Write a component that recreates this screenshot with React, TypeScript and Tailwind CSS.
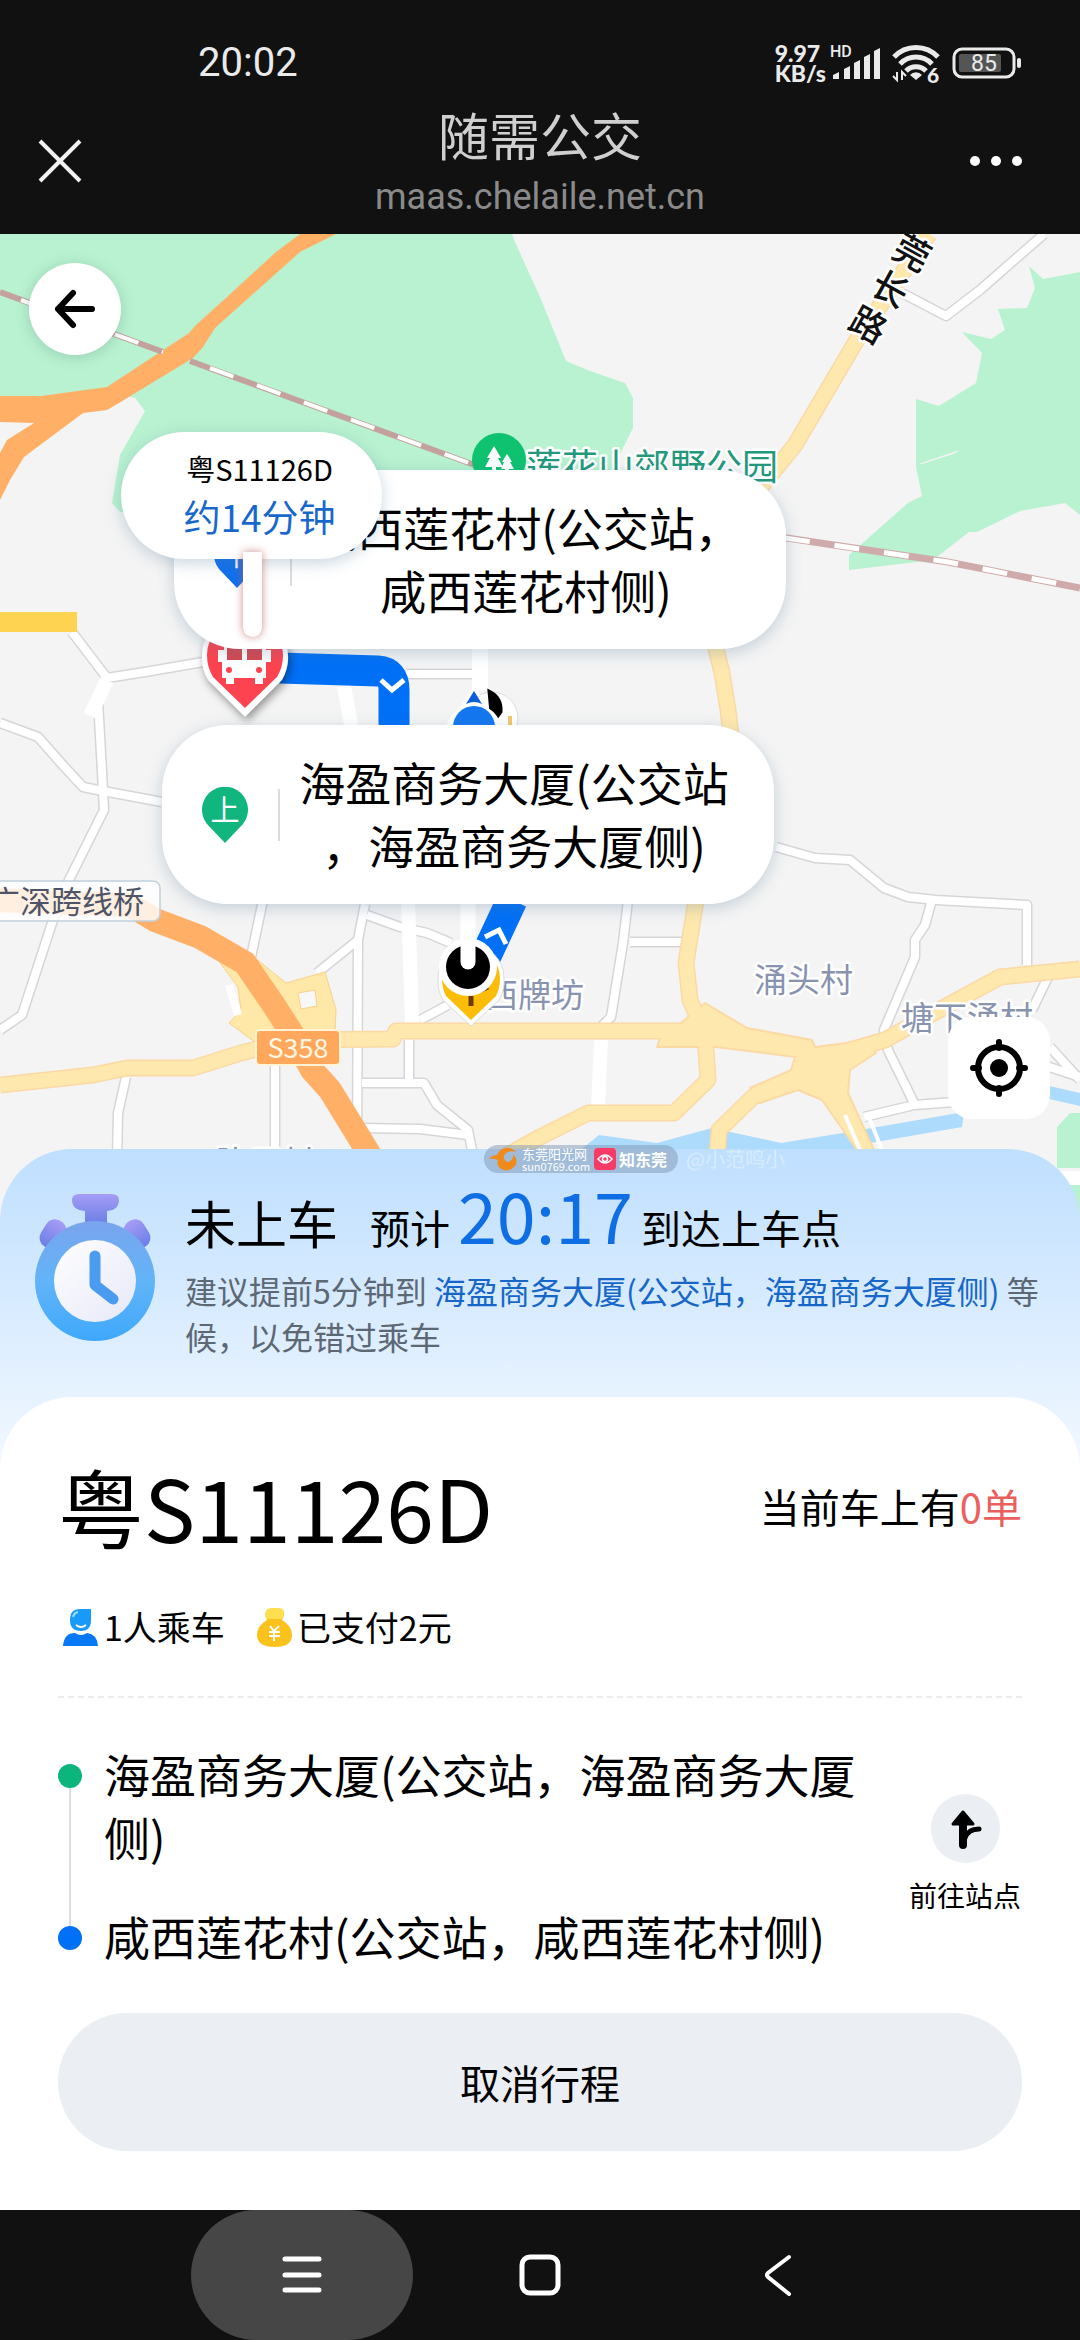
import { ReactNode } from "react";

const FONT = "font-['Noto_Sans_CJK_SC','Noto_Sans',sans-serif]";

const whiteRoads = [
  "M902 293L946 316L980 290L1044 234",
  "M72 632L107 678L145 672L203 662",
  "M0 723L38 737L60 762L83 787L103 791L162 802",
  "M98 700L103 790L104 810L69 880L52 923L22 1015L0 1030",
  "M406 674H478",
  "M263 900L251 957",
  "M275 1060V1160",
  "M126 1077L118 1113L117 1160",
  "M367 915L400 927L427 933L451 943",
  "M365 904L358 940L357 1160",
  "M358 940L317 973",
  "M409 1040V1083L424 1083L437 1105L468 1130L474 1160",
  "M362 1083H409",
  "M362 1128L420 1129L468 1135",
  "M420 1020L448 1005",
  "M628 900L623 943L611 1017L602 1026",
  "M630 942H683",
  "M776 847L815 858L850 860L884 888L908 897L936 900L1027 905V965",
  "M931 903L925 925L915 940L915 957L884 1030L888 1050L914 1103",
  "M864 1117L914 1105L955 1102",
  "M1048 977L1032 1010",
  "M1050 1047L1080 1080",
  "M1040 1064L1080 1077",
];

const yellowRoads = [
  "M0 1085L93 1075L127 1068H193L241 1053L293 1040L393 1039L396 1031H680",
  "M929 234L858 338L795 445L760 488",
  "M714 640L722 673L728 710L731 735",
  "M696 900L686 963L690 1000L705 1035",
  "M705 1035L708 1080L674 1113H588L540 1137L490 1165",
  "M802 1077L753 1097L719 1130L717 1160",
  "M850 1050L885 1040L930 1015L1000 977L1080 969",
];

function MapCanvas() {
  return (
    <svg className="block w-full h-full" viewBox="0 234 1080 1000" preserveAspectRatio="xMidYMin slice" aria-hidden="true">
      <rect x="0" y="234" width="1080" height="1000" fill="#f4f4f4" />
      {/* parks */}
      <path d="M0 234H512L515 242L540 297L566 361L590 371L625 383L633 398V428L622 450L600 500H200L120 512L112 503L120 455L145 411L135 398L100 390L0 400Z" fill="#b8f2d0" />
      <path d="M1029 266L1043 279L1080 272V515L1065 503L1020 511L977 532H969L933 560L849 570V555L908 503L922 496L916 467V399L939 406L976 383L982 353L962 332L991 339L1005 330L998 309L1027 308L1035 288Z" fill="#b8f2d0" />
      <path d="M920 464L958 451L952 454Z" fill="#f4f4f4" stroke="#f4f4f4" />
      <path d="M1057 1127L1070 1113H1080V1168H1057Z" fill="#b8f2d0" />
      <path d="M1058 1185H1080V1234H1058Z" fill="#b8f2d0" />
      {/* river */}
      <path d="M578 1152L599 1135L657 1143L712 1128L781 1143L843 1133L964 1112L962 1127L870 1143L850 1152Z" fill="#addbfb" />
      <path d="M1045 1085L1080 1093V1106L1045 1098Z" fill="#addbfb" />
      {/* side streets */}
      <g fill="none" strokeLinejoin="round">
        {whiteRoads.map((d) => <path key={d} d={d} stroke="#d6d6da" strokeWidth="11" />)}
        {whiteRoads.map((d) => <path key={d} d={d} stroke="#fff" strokeWidth="8" />)}
        <path d="M107 680L90 716M408 900L412 1022M601 1040L598 1110M344 686L352 730M1050 1178H1080" stroke="#fff" strokeWidth="14" />
        <path d="M480 645V690" stroke="#fff" strokeWidth="16" />
      </g>
      <path d="M0 622H77" stroke="#ffd352" strokeWidth="20" />
      {/* main roads */}
      <g fill="none" strokeLinejoin="round">
        {yellowRoads.map((d) => <path key={d} d={d} stroke="#fbd9a4" strokeWidth="17" />)}
        <path d="M220 963L255 958L286 983L325 972L336 1010L335 1034L255 1042L229 1023L241 1010L238 987Z" fill="#ffe8a8" stroke="#fbd08c" />
        <path d="M705 1003L747 1028L812 1040L815 1047L870 1040L876 1053L850 1070L848 1093L874 1150H857L822 1100L798 1090L760 1103L750 1088L791 1070L795 1057L716 1047H657L660 1038L681 1023Z" fill="#ffe8ae" stroke="#fbd9a4" strokeWidth="2" />
        {yellowRoads.map((d) => <path key={d} d={d} stroke="#ffe8ae" strokeWidth="14" />)}
      </g>
      <path d="M845 1115L860 1150M868 1115L882 1150" stroke="#fff" strokeWidth="4" />
      <path d="M298 993L315 990L317 1006L301 1009Z" fill="#f7f7f7" stroke="#fbd08c" />
      <path d="M229 985L238 1015" stroke="#fff" strokeWidth="8" />
      <path d="M-5 900L130 905L155 920L200 937L245 963L275 1007L293 1035L312 1070L330 1090L376 1165" fill="none" stroke="#ffb066" strokeWidth="24" strokeLinejoin="round" />
      <path d="M300 234L276 252L227 297L196 325L189 333L107 387L41 396H0V422L34 423L7 440L0 453V500L10 480L24 457L83 413L107 410L119 403L193 358L203 347L215 328L300 252L336 234Z" fill="#ffb066" />
      {/* railway */}
      <g fill="none">
        <path d="M0 292L163 352M190 361L480 467" stroke="#c3a29e" strokeWidth="6" />
        <path d="M21 300L163 352M210 368L480 467" stroke="#fff" strokeWidth="4" strokeDasharray="25 25" />
        <path d="M780 537L948 562L1080 588" stroke="#cfaaaa" strokeWidth="7" />
        <path d="M785 538L948 562L1080 588" stroke="#fff" strokeWidth="5" strokeDasharray="25 25" />
      </g>
      {/* planned route */}
      <g fill="none">
        <path d="M280 668L378 671Q394 672 394 690V740" stroke="#0070f7" strokeWidth="31" />
        <path d="M512 900L484 960" stroke="#0070f7" strokeWidth="31" />
        <path d="M381 680L392 690L404 680" stroke="#fff" strokeWidth="5" />
        <path d="M485 937L499 930L506 944" stroke="#fff" strokeWidth="5" />
      </g>
      {/* place names */}
      <g stroke="#fff" strokeWidth="5" strokeLinejoin="round" paintOrder="stroke" className={FONT}>
        <g fontSize="36" fill="#111" textAnchor="middle" fontWeight="500">
          <text transform="translate(912 253) rotate(29)" y="13">莞</text>
          <text transform="translate(890 289) rotate(29)" y="13">长</text>
          <text transform="translate(868 325) rotate(29)" y="13">路</text>
        </g>
        <text x="526" y="480" fontSize="36" fill="#23987c">莲花山郊野公园</text>
        <g fontSize="33" fill="#8893b0">
          <text x="485" y="1007">西牌坊</text>
          <text x="754" y="992">涌头村</text>
          <text x="901" y="1030">塘下涌村</text>
          <text x="216" y="1175">陈屋村</text>
        </g>
      </g>
      <rect x="-20" y="881" width="180" height="40" rx="7" fill="#fff" fillOpacity="0.8" stroke="#bfd0dc" strokeWidth="1.5" />
      <text x="-11" y="913" fontSize="31" fill="#4d5468" className={FONT}>广深跨线桥</text>
      <rect x="256" y="1030" width="84" height="35" rx="4" fill="#ffa85c" stroke="#fff3d6" strokeWidth="2" />
      <text x="298" y="1058" fontSize="27" textAnchor="middle" fill="#fff6e4" className={FONT}>S358</text>
      {/* park marker */}
      <circle cx="499" cy="460" r="27" fill="#0fc270" />
      <path d="M494 446L501 458H498L503 467H496V476H492V467H485L490 458H487ZM507 454L512 462H510L514 469H509V476H505V469H501L504 462H502Z" fill="#fff" />
      {/* boarding stop */}
      <path d="M471 1026L443 1000Q437 990 438 978A33 33 0 0 1 504 978Q505 990 499 1000Z" fill="#fff" stroke="#dcdcdc" />
      <path d="M471 1020L446 996Q442 988 442 978A29 29 0 0 1 500 978Q500 988 496 996Z" fill="#fbbd08" />
      <path d="M471 996V1006M481 990L488 987" stroke="#6b3a0c" strokeWidth="5" />
      <circle cx="468" cy="967" r="29" fill="#fff" />
      <circle cx="468" cy="967" r="22" fill="#000" />
      <path d="M468 900V962" stroke="#fff" strokeWidth="15" strokeLinecap="round" />
      {/* current position */}
      <circle cx="492" cy="718" r="26" fill="#fff" stroke="#ddd" />
      <path d="M489 691Q502 697 501 712L492 724Z" fill="#000" stroke="#000" strokeWidth="3" />
      <path d="M510 716V726" stroke="#f5c86a" strokeWidth="4" />
      <path d="M474 685L488 708A28 28 0 1 1 460 708Z" fill="#fff" />
      <path d="M474 691L482 704Q474 700 466 704Z" fill="#0b5fd8" />
      <circle cx="474" cy="727" r="21" fill="#1477f0" />
      {/* bus */}
      <path d="M245 717L208 680Q201 668 202 655A43 43 0 0 1 288 655Q289 668 282 680Z" fill="#fff" className="drop-shadow-[2px_4px_4px_rgba(0,0,0,0.4)]" />
      <path d="M245 708L213 677Q207 667 207 655A38 38 0 0 1 283 655Q283 667 277 677Z" fill="#fd434f" />
      <path d="M224 640H266V650H271V662H266V678H263V684H255V678H234V684H226V678H222V662H218V650H224Z" fill="#fff" />
      <path d="M227 645H242V660H227ZM247 645H262V660H247Z" fill="#d84650" />
      <circle cx="229" cy="670" r="3" fill="#fd434f" />
      <circle cx="259" cy="670" r="3" fill="#fd434f" />
    </svg>
  );
}

function StopBubble({ place, color, mark, children }: { place: string; color: string; mark: string; children: ReactNode }) {
  return (
    <div className={`absolute ${place} flex h-[179px] w-[612px] items-center rounded-[66px] bg-white pl-10 shadow-[0_4px_16px_rgba(80,120,150,0.3)]`}>
      <svg className="h-14 w-[46px] shrink-0" viewBox="0 0 46 56">
        <path d="M23 56L5 37A23 23 0 1 1 41 37Z" fill={color} />
        <text x="23" y="34" fontSize="29" textAnchor="middle" fill="#fff">{mark}</text>
      </svg>
      <span className="ml-[30px] h-[52px] w-[2px] shrink-0 bg-[#dcdcdc]" />
      <p className="ml-[18px] w-[432px] pb-1 text-center text-[46px] leading-[63px] whitespace-nowrap text-black">{children}</p>
    </div>
  );
}

function StatusBar() {
  return (
    <div className="flex h-[88px] items-start justify-between pt-[37px] pr-[58px] pl-[198px] text-[#eaeaea]">
      <time className="font-[Roboto,sans-serif] text-[40px] leading-[52px]">20:02</time>
      <div className="flex h-[52px] items-center">
        <div className="font-[Lato,sans-serif] text-[23px] font-black leading-5">
          <div>9.97</div>
          <div>KB/s</div>
        </div>
        <svg className="ml-1 h-10 w-[52px]" viewBox="0 0 52 40" fill="#eaeaea">
          <text x="0" y="14" fontSize="16" fontWeight="500" fontFamily="Roboto, sans-serif">HD</text>
          <path d="M3 36V32L9 29V36ZM14 36V26L20 23V36ZM24 36V20L30 17V36ZM34 36V14L40 11V36ZM44 36V8L50 5V36Z" />
        </svg>
        <svg className="ml-[10px] h-11 w-[52px]" viewBox="0 -2 52 44">
          <g fill="none" stroke="#eaeaea" strokeWidth="5">
            <path d="M2 14A30 30 0 0 1 46 14" />
            <path d="M8 21A22 22 0 0 1 40 21" />
            <path d="M14 28A14 14 0 0 1 34 28" />
          </g>
          <path d="M18 32A8 8 0 0 1 30 32L24 37Z" fill="#eaeaea" />
          <path d="M5 29V37L1 33M10 37V29L14 33" fill="none" stroke="#eaeaea" strokeWidth="2" />
          <circle cx="41" cy="34" r="8" fill="#111" />
          <text x="35" y="40" fontSize="21" fontWeight="900" fill="#eaeaea" fontFamily="Lato, sans-serif">6</text>
        </svg>
        <svg className="ml-2 h-10 w-[70px]" viewBox="0 0 70 40">
          <rect x="2" y="6" width="60" height="28" rx="8" fill="none" stroke="#eaeaea" strokeWidth="3" />
          <rect x="7" y="11" width="42" height="18" rx="2" fill="#555" />
          <rect x="65" y="15" width="4" height="10" rx="2" fill="#eaeaea" />
          <text x="32" y="28" fontSize="23" textAnchor="middle" fill="#eaeaea" fontFamily="Roboto, sans-serif">85</text>
        </svg>
      </div>
    </div>
  );
}

function TitleBar() {
  return (
    <header className="flex h-[146px] items-center justify-between px-9">
      <button aria-label="关闭" className="w-[74px]">
        <svg className="size-12" viewBox="0 0 48 48" fill="none" stroke="#f2f2f2" strokeWidth="4">
          <path d="M4 4L44 44M44 4L4 44" />
        </svg>
      </button>
      <div className="pt-3 text-center">
        <h1 className="text-[51px] leading-[60px] text-[#cfcfcf]">随需公交</h1>
        <p className="font-[Roboto,sans-serif] text-[36px] leading-[66px] text-[#8a8a8a]">maas.chelaile.net.cn</p>
      </div>
      <button aria-label="更多" className="flex w-[74px] gap-[11px]">
        <span className="size-[10px] rounded-full bg-white" />
        <span className="size-[10px] rounded-full bg-white" />
        <span className="size-[10px] rounded-full bg-white" />
      </button>
    </header>
  );
}

function TimerIcon() {
  return (
    <svg className="h-[152px] w-[124px] shrink-0" viewBox="0 0 124 152" aria-hidden="true">
      <defs>
        <linearGradient id="knob" x1="0" y1="0" x2="0" y2="1">
          <stop offset="0" stopColor="#a79cf6" />
          <stop offset="1" stopColor="#6a7fe6" />
        </linearGradient>
        <linearGradient id="ring" x1="0" y1="0" x2="0" y2="1">
          <stop offset="0" stopColor="#7aa4ee" />
          <stop offset="0.5" stopColor="#62b4f8" />
          <stop offset="1" stopColor="#3fa8fc" />
        </linearGradient>
        <linearGradient id="face" x1="0" y1="0" x2="1" y2="1">
          <stop offset="0" stopColor="#ffffff" />
          <stop offset="1" stopColor="#e6e8f8" />
        </linearGradient>
      </defs>
      <rect x="9" y="27" width="22" height="30" rx="10" fill="url(#knob)" transform="rotate(32 20 42)" />
      <rect x="93" y="27" width="22" height="30" rx="10" fill="url(#knob)" transform="rotate(-32 104 42)" />
      <path d="M46 2H78Q86 2 86 8Q86 18 74 19V32H52V19Q39 18 39 8Q39 2 46 2Z" fill="url(#knob)" />
      <circle cx="62" cy="89" r="60" fill="url(#ring)" />
      <circle cx="62" cy="89" r="41" fill="url(#face)" />
      <path d="M62 64V93L80 107" fill="none" stroke="#4b9cf0" strokeWidth="11" strokeLinecap="round" strokeLinejoin="round" />
    </svg>
  );
}

function Watermark() {
  return (
    <div className="absolute top-[-4px] left-[484px] flex h-7 items-center whitespace-nowrap text-white">
      <div className="flex h-7 w-[194px] items-center rounded-full bg-[#7f98b4]/50 pl-1">
        <svg className="h-6 w-[30px]" viewBox="0 0 30 24">
          <path d="M1 12Q4 8 9 8Q12 1 19 1Q25 1 28 5Q21 3 17 7Q14 12 19 15Q26 14 25 7Q31 13 27 19Q21 26 13 22Q8 18 10 13Q5 11 1 12Z" fill="#f08a1c" />
        </svg>
        <div className="ml-1 w-[66px]">
          <div className="text-[13px] leading-[14px]">东莞阳光网</div>
          <div className="text-[11px] leading-[10px]">sun0769.com</div>
        </div>
        <svg className="ml-[6px] size-[22px]" viewBox="0 0 22 22">
          <rect width="22" height="22" rx="4" fill="#f83a66" />
          <path d="M4 11Q11 3 18 11Q11 19 4 11Z" fill="none" stroke="#fff" strokeWidth="1.5" />
          <circle cx="11" cy="11" r="2.5" fill="none" stroke="#fff" strokeWidth="1.5" />
        </svg>
        <span className="ml-[3px] text-[16px] leading-5 font-bold">知东莞</span>
      </div>
      <span className="ml-2 text-[20px] leading-7 text-white/40">@小范鸣小</span>
    </div>
  );
}

function TripStatus() {
  return (
    <section className="flex h-[248px] pr-8 pl-[33px]">
      <div className="pt-[43px]">
        <TimerIcon />
      </div>
      <div className="ml-7 flex-1 pt-[30px]">
        <div className="flex items-baseline leading-none text-black">
          <h2 className="text-[51px]">未上车</h2>
          <span className="ml-8 text-[40px]">预计</span>
          <span className="ml-2 text-[70px] text-[#0f6ee4]">20:17</span>
          <span className="ml-2 text-[40px]">到达上车点</span>
        </div>
        <p className="mt-[18px] text-[32px] leading-[46px] text-[#5d6875]">
          建议提前5分钟到 <span className="text-[#1767c8]">海盈商务大厦(公交站，海盈商务大厦侧)</span> 等候，以免错过乘车
        </p>
      </div>
    </section>
  );
}

function StopRow({ name, first }: { name: string; first?: boolean }) {
  return (
    <li className="flex gap-[22px]">
      <div className="flex w-6 flex-col items-center">
        <span className={first ? "h-[22px]" : "h-[22px] w-[2px] bg-[#dedede]"} />
        <span className={first ? "size-6 rounded-full bg-[#0cb57c]" : "size-6 rounded-full bg-[#0070f7]"} />
        {first && <span className="w-[2px] flex-1 bg-[#dedede]" />}
      </div>
      <span className={first ? "flex-1 pb-9" : "flex-1"}>{name}</span>
    </li>
  );
}

function TripPanel() {
  return (
    <section className="flex-1 rounded-t-[72px] bg-white px-[58px] pt-[66px] pb-14 text-black">
      <div className="flex items-center justify-between">
        <h2 className="text-[86px] leading-none">粤S11126D</h2>
        <p className="text-[40px] leading-[60px]">当前车上有<span className="text-[#e9605e]">0单</span></p>
      </div>

      <div className="mt-[54px] flex h-12 items-center text-[34px] leading-[48px]">
        <svg className="mr-1 size-[42px]" viewBox="0 0 42 42" aria-hidden="true">
          <path d="M12 14Q12 3 22 3H33V14Q33 25 23 25Q12 25 12 14Z" fill="#189af8" />
          <path d="M15 11Q16 7 20 6" fill="none" stroke="#9fdcff" strokeWidth="2" />
          <path d="M18 19Q23 23 28 19" fill="none" stroke="#fff" strokeWidth="2" />
          <path d="M5 40Q6 27 17 27Q23 31 29 27Q39 28 40 40Z" fill="#0878f4" />
        </svg>
        <span>1人乘车</span>
        <svg className="mr-[2px] ml-7 size-[42px]" viewBox="0 0 42 42" aria-hidden="true">
          <path d="M15 3Q22 1 29 3Q33 7 29 14Q39 20 39 29Q39 41 22 41Q4 41 4 29Q4 20 14 14Q10 7 15 3Z" fill="#fcc21c" />
          <path d="M15 3Q22 1 29 3Q33 7 29 13H14Q10 7 15 3Z" fill="#ffdf4e" />
          <path d="M17 20L21 25L26 20M16 26H27M16 30H27M21 25V35" fill="none" stroke="#fff" strokeWidth="2" />
        </svg>
        <span>已支付2元</span>
      </div>

      <div className="mt-[45px] border-t-2 border-dashed border-[#ececec]" />

      <div className="mt-11 flex items-center gap-4">
        <ul className="flex-1 text-[46px] leading-[63px]">
          <StopRow name="海盈商务大厦(公交站，海盈商务大厦侧)" first />
          <StopRow name="咸西莲花村(公交站，咸西莲花村侧)" />
        </ul>
        <button className="flex w-[114px] flex-col items-center gap-3">
          <span className="flex size-[69px] items-center justify-center rounded-full bg-[#ebeef3]">
            <svg className="size-10" viewBox="0 0 40 40" fill="none" stroke="#000" strokeLinecap="round" strokeLinejoin="round">
              <path d="M18 36V14" strokeWidth="8" />
              <path d="M18 3L8 15H28Z" fill="#000" strokeWidth="3" />
              <path d="M20 29Q23 20 34 20" strokeWidth="5" />
            </svg>
          </span>
          <span className="text-[28px] leading-10 whitespace-nowrap">前往站点</span>
        </button>
      </div>

      <button className="mt-[46px] h-[138px] w-full rounded-full bg-[#ebeef3] text-[40px]">取消行程</button>
    </section>
  );
}

function SystemNav() {
  return (
    <nav className="flex h-[130px] justify-center gap-4 bg-[#111]">
      <button aria-label="最近任务" className="flex w-[222px] items-center justify-center rounded-full bg-[#464646]">
        <svg className="size-12" viewBox="0 0 48 48" stroke="#fff" strokeWidth="5" strokeLinecap="round">
          <path d="M7 8H41M7 24H41M7 39H41" />
        </svg>
      </button>
      <button aria-label="主屏幕" className="flex w-[222px] items-center justify-center">
        <svg className="size-12" viewBox="0 0 48 48" fill="none" stroke="#fff" strokeWidth="5">
          <rect x="6" y="6" width="36" height="36" rx="8" />
        </svg>
      </button>
      <button aria-label="返回" className="flex w-[222px] items-center justify-center">
        <svg className="size-12" viewBox="0 0 48 48" fill="none" stroke="#fff" strokeWidth="4" strokeLinecap="round">
          <path d="M35 6L14 22Q12 24 14 26L35 43" />
        </svg>
      </button>
    </nav>
  );
}

export default function App() {
  return (
    <div className={`flex min-h-screen w-full flex-col bg-[#111] ${FONT}`}>
      <StatusBar />
      <TitleBar />

      <main className="flex flex-1 flex-col bg-white">
        <div className="relative h-[1000px] overflow-hidden">
          <MapCanvas />

          <StopBubble place="top-[236px] left-[174px]" color="#1170ee" mark="下">
            咸西莲花村(公交站，<br />咸西莲花村侧)
          </StopBubble>
          <StopBubble place="top-[491px] left-[162px]" color="#10b67e" mark="上">
            海盈商务大厦(公交站<br />，海盈商务大厦侧)
          </StopBubble>

          <div className="absolute top-[198px] left-[121px] flex h-[127px] w-[261px] flex-col items-center justify-center rounded-full bg-white pb-1 pl-4 shadow-[0_4px_16px_rgba(80,120,150,0.3)]">
            <span className="text-[29px] leading-[44px] text-black">粤S11126D</span>
            <span className="text-[37px] leading-[52px] text-[#1868cc]">约14分钟</span>
          </div>
          <div className="absolute top-[318px] left-[243px] h-[85px] w-[19px] rounded-b-full bg-white shadow-[0_0_8px_rgba(190,90,90,0.7)]" />

          <button aria-label="返回上一页" className="absolute top-[29px] left-[29px] flex size-[92px] items-center justify-center rounded-full bg-white shadow-[0_2px_14px_rgba(60,100,100,0.25)]">
            <svg className="size-12" viewBox="0 0 48 48" fill="none" stroke="#000" strokeWidth="6" strokeLinecap="round" strokeLinejoin="round">
              <path d="M41 24H7M22 8L7 24L22 40" />
            </svg>
          </button>
          <button aria-label="定位" className="absolute top-[783px] right-[30px] flex size-[102px] items-center justify-center rounded-[24px] bg-white">
            <svg className="size-[58px]" viewBox="0 0 58 58" fill="none" stroke="#000" strokeWidth="6" strokeLinecap="round">
              <circle cx="29" cy="29" r="21" />
              <path d="M29 3V9M29 49V55M3 29H9M49 29H55" />
              <circle cx="29" cy="29" r="9" fill="#000" stroke="none" />
            </svg>
          </button>
        </div>

        <div className="relative -mt-[85px] flex flex-1 flex-col rounded-t-[72px] bg-linear-to-b from-[#bfdfff] to-[#f2f8ff] to-30%">
          <Watermark />
          <TripStatus />
          <TripPanel />
        </div>
      </main>

      <SystemNav />
    </div>
  );
}
